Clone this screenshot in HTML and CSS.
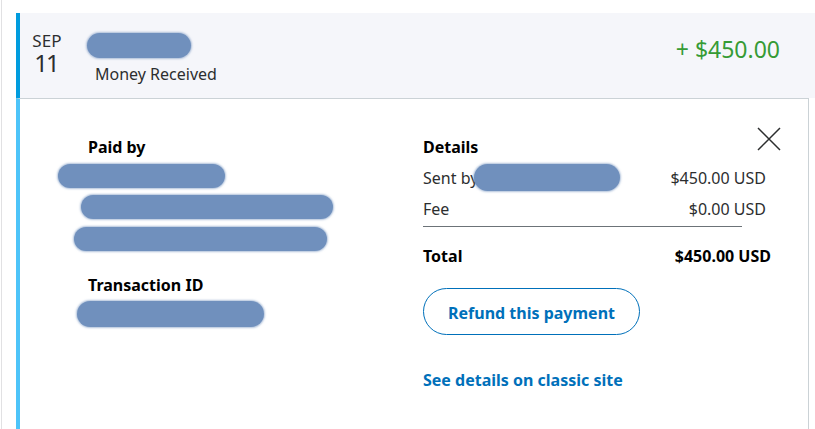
FILE: index.html
```html
<!DOCTYPE html>
<html lang="en">
<head>
<meta charset="utf-8">
<title>Transaction</title>
<link rel="stylesheet" href="styles.css">
</head>
<body>
<div class="page">
  <div class="card">
    <div class="header">
      <div class="date">
        <div class="month">SEP</div>
        <div class="day">11</div>
      </div>
      <div class="who">
        <div class="blob blob-name"></div>
        <div class="type">Money Received</div>
      </div>
      <div class="amount">+ $450.00</div>
    </div>
    <div class="panel">
      <button class="close" aria-label="Close">
        <svg width="24" height="24" viewBox="0 0 24 24"><path d="M1 1 L23 23 M23 1 L1 23" stroke="#2c2e2f" stroke-width="1.5" fill="none"/></svg>
      </button>
      <div class="cols">
        <div class="col-left">
          <div class="label">Paid by</div>
          <div class="blob blob-a"></div>
          <div class="blob blob-b"></div>
          <div class="blob blob-c"></div>
          <div class="label label-tx">Transaction ID</div>
          <div class="blob blob-d"></div>
        </div>
        <div class="col-right">
          <div class="label">Details</div>
          <div class="row row-first"><span class="sent">Sent by<span class="blob blob-sent"></span></span><span>$450.00 USD</span></div>
          <div class="row"><span>Fee</span><span>$0.00 USD</span></div>
          <div class="divider"></div>
          <div class="row row-total"><span>Total</span><span>$450.00 USD</span></div>
          <button class="refund">Refund this payment</button>
          <a class="classic" href="#">See details on classic site</a>
        </div>
      </div>
    </div>
  </div>
</div>
</body>
</html>
```

FILE: styles.css
```css
html, body {
  margin: 0;
  padding: 0;
  background: #ffffff;
  overflow: hidden;
}
body {
  font-family: "Noto Sans", "Open Sans", sans-serif;
  color: #2c2e2f;
}
.page {
  margin-left: 1px;
  border-left: 1px solid #e1e1e3;
  padding: 13px 0 0 14px;
}
.card {
  display: flex;
  flex-direction: column;
}
.header {
  height: 85px;
  box-sizing: border-box;
  background: #f5f6fa;
  border-left: 4px solid #009cde;
  display: flex;
  align-items: flex-start;
  padding: 20px 35px 0 12px;
}
.date {
  width: 30px;
  text-align: center;
}
.month {
  font-size: 17px;
  line-height: 16px;
  letter-spacing: 0.2px;
}
.day {
  font-size: 24px;
  line-height: 22px;
  margin-top: 3px;
  letter-spacing: -2px;
  padding-right: 2px;
}
.who {
  flex: 1;
  margin: 0 0 0 33px;
}
.blob {
  background: #7090bd;
  border-radius: 14px;
  box-shadow: 0 0 2px 1px rgba(112, 144, 189, 0.55);
}
.blob-name {
  width: 104px;
  height: 25px;
  margin-left: -8px;
  margin-bottom: 6px;
}
.type {
  font-size: 16px;
  line-height: 20px;
}
.amount {
  font-size: 23px;
  line-height: 30px;
  margin-top: 1px;
  color: #369b35;
}
.panel {
  position: relative;
  margin-right: 6px;
  border-top: 1px solid #cbd2d6;
  border-left: 4px solid #4dc4f9;
  border-right: 1px solid #cbd2d6;
  height: 292px;
  padding: 38px 0 0 68px;
}
.close {
  position: absolute;
  top: 28px;
  right: 27px;
  width: 24px;
  height: 24px;
  padding: 0;
  border: 0;
  background: none;
}
.close svg {
  display: block;
}
.cols {
  display: grid;
  grid-template-columns: 335px 348px;
}
.label {
  font-size: 16px;
  line-height: 20px;
  font-weight: 700;
  color: #000;
}
.blob-a {
  width: 167px;
  height: 24px;
  margin: 7px 0 0 -30px;
}
.blob-b {
  width: 252px;
  height: 24px;
  margin: 7px 0 0 -7px;
}
.blob-c {
  width: 253px;
  height: 24px;
  margin: 8px 0 0 -14px;
}
.label-tx {
  margin-top: 24px;
}
.blob-d {
  width: 187px;
  height: 26px;
  margin: 6px 0 0 -11px;
}
.row {
  display: flex;
  justify-content: space-between;
  font-size: 16px;
  line-height: 20px;
  margin-top: 11px;
  width: 343px;
}
.sent {
  display: inline-flex;
  align-items: center;
}
.blob-sent {
  display: inline-block;
  width: 146px;
  height: 27px;
  margin: -4px 0 -3px -4px;
}
.divider {
  width: 319px;
  height: 1px;
  margin-top: 7px;
  background: #6c7378;
}
.row-total {
  margin-top: 19px;
  font-weight: 700;
  width: 348px;
  color: #000;
}
.refund {
  display: flex;
  align-items: center;
  justify-content: center;
  margin-top: 22px;
  width: 217px;
  height: 47px;
  box-sizing: border-box;
  border: 1px solid #0070ba;
  border-radius: 24px;
  background: #fff;
  color: #0070ba;
  font-family: inherit;
  font-size: 16px;
  font-weight: 700;
  padding: 3px 0 0;
}
.classic {
  display: block;
  margin-top: 35px;
  font-size: 16px;
  line-height: 20px;
  font-weight: 700;
  color: #0070ba;
  text-decoration: none;
}
```
